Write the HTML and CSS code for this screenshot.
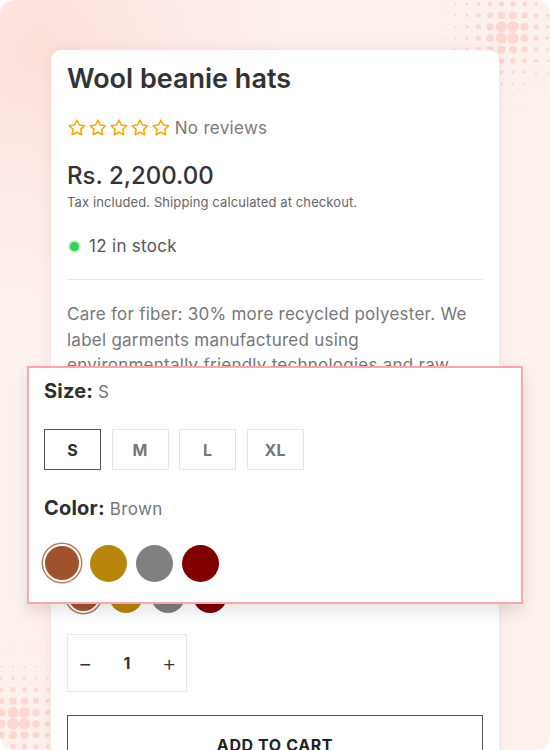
FILE: index.html
```html
<!DOCTYPE html>
<html>
<head>
<meta charset="utf-8">
<link rel="stylesheet" href="styles.css">
</head>
<body>
<div class="page">
  <svg class="dots dots-tr" id="dotsTR" width="130" height="125" viewBox="420 0 130 125"></svg>
  <svg class="dots dots-bl" id="dotsBL" width="52" height="112" viewBox="0 638 52 112"></svg>

  <div class="card">
    <h1 class="title">Wool beanie hats</h1>
    <div class="rating">
      <span class="stars">
        <svg class="star" viewBox="0 0 24 24"><path d="M12 2.6l2.85 5.9 6.5.85-4.75 4.5 1.2 6.45L12 17.2l-5.8 3.1 1.2-6.45-4.75-4.5 6.5-.85z"/></svg>
        <svg class="star" viewBox="0 0 24 24"><path d="M12 2.6l2.85 5.9 6.5.85-4.75 4.5 1.2 6.45L12 17.2l-5.8 3.1 1.2-6.45-4.75-4.5 6.5-.85z"/></svg>
        <svg class="star" viewBox="0 0 24 24"><path d="M12 2.6l2.85 5.9 6.5.85-4.75 4.5 1.2 6.45L12 17.2l-5.8 3.1 1.2-6.45-4.75-4.5 6.5-.85z"/></svg>
        <svg class="star" viewBox="0 0 24 24"><path d="M12 2.6l2.85 5.9 6.5.85-4.75 4.5 1.2 6.45L12 17.2l-5.8 3.1 1.2-6.45-4.75-4.5 6.5-.85z"/></svg>
        <svg class="star" viewBox="0 0 24 24"><path d="M12 2.6l2.85 5.9 6.5.85-4.75 4.5 1.2 6.45L12 17.2l-5.8 3.1 1.2-6.45-4.75-4.5 6.5-.85z"/></svg>
      </span>
      <span class="reviews">No reviews</span>
    </div>
    <div class="price">Rs. 2,200.00</div>
    <div class="tax">Tax included. Shipping calculated at checkout.</div>
    <div class="stock"><span class="stock-dot"></span>12 in stock</div>
    <hr class="divider">
    <p class="desc">Care for fiber: 30% more recycled polyester. We label garments manufactured using environmentally friendly technologies and raw materials with reduced impact.</p>

    <div class="variants">
      <div class="covered">
        <div class="opt-label">Size: <span class="opt-value">S</span></div>
        <div class="sizes">
          <span class="size selected">S</span>
          <span class="size">M</span>
          <span class="size">L</span>
          <span class="size">XL</span>
        </div>
        <div class="opt-label">Color: <span class="opt-value">Brown</span></div>
      </div>
      <div class="swatches">
        <span class="swatch selected brown"></span>
        <span class="swatch gold"></span>
        <span class="swatch grey"></span>
        <span class="swatch maroon"></span>
      </div>
    </div>

    <div class="qty">
      <span class="qty-btn">&minus;</span>
      <span class="qty-val">1</span>
      <span class="qty-btn">+</span>
    </div>
    <div class="cart-btn">ADD TO CART</div>
  </div>

  <div class="zoom-panel">
    <div class="z-label">Size: <span class="z-value">S</span></div>
    <div class="z-sizes">
      <span class="z-size selected">S</span>
      <span class="z-size">M</span>
      <span class="z-size">L</span>
      <span class="z-size">XL</span>
    </div>
    <div class="z-label z-color">Color: <span class="z-value">Brown</span></div>
    <div class="z-swatches">
      <span class="z-swatch selected brown"></span>
      <span class="z-swatch gold"></span>
      <span class="z-swatch grey"></span>
      <span class="z-swatch maroon"></span>
    </div>
  </div>
</div>
<script src="dots.js"></script>
</body>
</html>
```

FILE: dots.js
```js
(function () {
  var NS = "http://www.w3.org/2000/svg";
  function draw(id, x0, y0, cols, rows, cx, cy) {
    var svg = document.getElementById(id);
    for (var j = 0; j < rows; j++) {
      for (var i = 0; i < cols; i++) {
        var x = x0 + i * 11.5, y = y0 + j * 11.4;
        var d = Math.sqrt((x - cx) * (x - cx) + (y - cy) * (y - cy));
        var r = 7.5 * Math.exp(-d / 28);
        if (r < 0.4) continue;
        var c = document.createElementNS(NS, "circle");
        c.setAttribute("cx", x.toFixed(1));
        c.setAttribute("cy", y.toFixed(1));
        c.setAttribute("r", r.toFixed(2));
        svg.appendChild(c);
      }
    }
  }
  draw("dotsTR", 421, 4, 13, 11, 507.5, 32.5);
  draw("dotsBL", 1.5, 644, 5, 11, 18.5, 719);
})();
```

FILE: styles.css
```css
html, body {
  margin: 0;
  padding: 0;
  background: #ffffff;
}
.page {
  position: relative;
  width: 550px;
  height: 750px;
  overflow: hidden;
  border-radius: 14px;
  background:
    radial-gradient(circle at 40px 50px, #fde0da 0, #fde9e5 120px, rgba(253,240,237,0) 260px),
    #fdf1ee;
  font-family: "Inter", "Noto Sans", sans-serif;
}
.dots {
  position: absolute;
}
.dots circle {
  fill: #fdd6d0;
}
.dots-tr {
  left: 420px;
  top: 0;
}
.dots-bl {
  left: 0;
  top: 638px;
}
.card {
  position: relative;
  z-index: 1;
  margin: 50px 0 0 51px;
  width: 448px;
  height: 760px;
  box-sizing: border-box;
  padding: 12px 16px 0;
  background: #ffffff;
  border-radius: 10px;
  box-shadow: 0 0 14px rgba(120, 80, 70, 0.10);
}
.title {
  margin: 0;
  font-size: 27px;
  line-height: 34px;
  font-weight: 600;
  color: #333333;
}
.rating {
  display: flex;
  align-items: center;
  margin-top: 21px;
  height: 22px;
}
.stars {
  display: flex;
  gap: 1.2px;
}
.star {
  width: 19.8px;
  height: 19.8px;
}
.star path {
  fill: none;
  stroke: #f7a900;
  stroke-width: 1.9;
  stroke-linejoin: round;
}
.reviews {
  margin-left: 4px;
  font-size: 17px;
  letter-spacing: 0.3px;
  color: #7a7a7a;
}
.price {
  margin-top: 22px;
  font-size: 24px;
  line-height: 30px;
  font-weight: 500;
  color: #333333;
}
.tax {
  margin-top: 3px;
  font-size: 13px;
  letter-spacing: 0.1px;
  line-height: 16px;
  color: #666666;
}
.stock {
  display: flex;
  align-items: center;
  margin-top: 26px;
  font-size: 17px;
  letter-spacing: 0.3px;
  line-height: 20px;
  color: #555555;
}
.stock-dot {
  width: 9px;
  height: 9px;
  border-radius: 50%;
  background: #2fd158;
  box-shadow: 0 0 0 2px #c6f1d0;
  margin: 0 10px 0 3px;
}
.divider {
  margin: 23px 0 0;
  border: 0;
  border-top: 1px solid #e6e6e6;
}
.desc {
  margin: 22px 0 0;
  font-size: 17px;
  letter-spacing: 0.25px;
  line-height: 25.5px;
  color: #777777;
}
.variants {
  margin-top: 20px;
}
.covered {
  visibility: hidden;
}
.opt-label {
  font-size: 17px;
  font-weight: 700;
  color: #333;
  line-height: 22px;
}
.opt-value {
  font-size: 14px;
  font-weight: 400;
  color: #777;
}
.sizes {
  display: flex;
  gap: 10px;
  margin: 24px 0 24px;
}
.size {
  width: 50px;
  height: 37px;
  box-sizing: border-box;
  border: 1px solid #e6e6e6;
  display: flex;
  align-items: center;
  justify-content: center;
  font-size: 14px;
  font-weight: 700;
  color: #777;
}
.size.selected {
  border-color: #555;
  color: #333;
}
.swatches {
  display: flex;
  align-items: center;
  gap: 8px;
  margin-top: 23px;
  margin-left: -1px;
}
.swatch {
  width: 34px;
  height: 34px;
  border-radius: 50%;
  box-sizing: border-box;
}
.swatch.selected {
  width: 35px;
  height: 35px;
  border: 2px solid #fff;
  box-shadow: 0 0 0 1.5px #b9785a;
}
.brown { background: #a0522d; }
.gold { background: #b8860b; }
.grey { background: #808080; }
.maroon { background: #800000; }

.qty {
  display: flex;
  align-items: center;
  justify-content: space-between;
  box-sizing: border-box;
  width: 120px;
  height: 58px;
  margin-top: 21px;
  padding: 0 10px;
  border: 1px solid #e8e8e8;
  color: #333;
}
.qty-btn {
  font-size: 22px;
  font-weight: 300;
  width: 14px;
  text-align: center;
}
.qty-val {
  font-size: 16px;
  font-weight: 700;
}
.cart-btn {
  margin-top: 23px;
  height: 58px;
  box-sizing: border-box;
  border: 1.5px solid #555;
  display: flex;
  align-items: center;
  justify-content: center;
  padding-top: 2px;
  font-size: 16px;
  font-weight: 700;
  letter-spacing: 0.6px;
  color: #222;
}

.zoom-panel {
  position: absolute;
  z-index: 2;
  left: 27px;
  top: 366px;
  width: 496px;
  height: 238px;
  box-sizing: border-box;
  border: 2px solid #f9a6ad;
  background: #ffffff;
  padding: 10px 0 0 15px;
  box-shadow: 0 8px 14px rgba(0, 0, 0, 0.10);
}
.z-label {
  font-size: 20px;
  font-weight: 700;
  letter-spacing: 0.2px;
  color: #2e2e2e;
  line-height: 26px;
}
.z-value {
  font-size: 17px;
  font-weight: 400;
  letter-spacing: 0.4px;
  color: #777;
}
.z-sizes {
  display: flex;
  gap: 10.5px;
  margin-top: 24px;
}
.z-size {
  width: 57px;
  height: 41px;
  box-sizing: border-box;
  border: 1px solid #e6e6e6;
  display: flex;
  align-items: center;
  justify-content: center;
  font-size: 16px;
  font-weight: 700;
  color: #777;
}
.z-size.selected {
  border: 1.5px solid #555;
  color: #2e2e2e;
}
.z-color {
  margin-top: 25px;
}
.z-swatches {
  display: flex;
  align-items: center;
  gap: 9px;
  margin-top: 22px;
  margin-left: -1px;
}
.z-swatch {
  width: 37px;
  height: 37px;
  border-radius: 50%;
  box-sizing: border-box;
}
.z-swatch.selected {
  width: 38px;
  height: 38px;
  border: 2px solid #fff;
  box-shadow: 0 0 0 1.5px #b9785a;
}
```
